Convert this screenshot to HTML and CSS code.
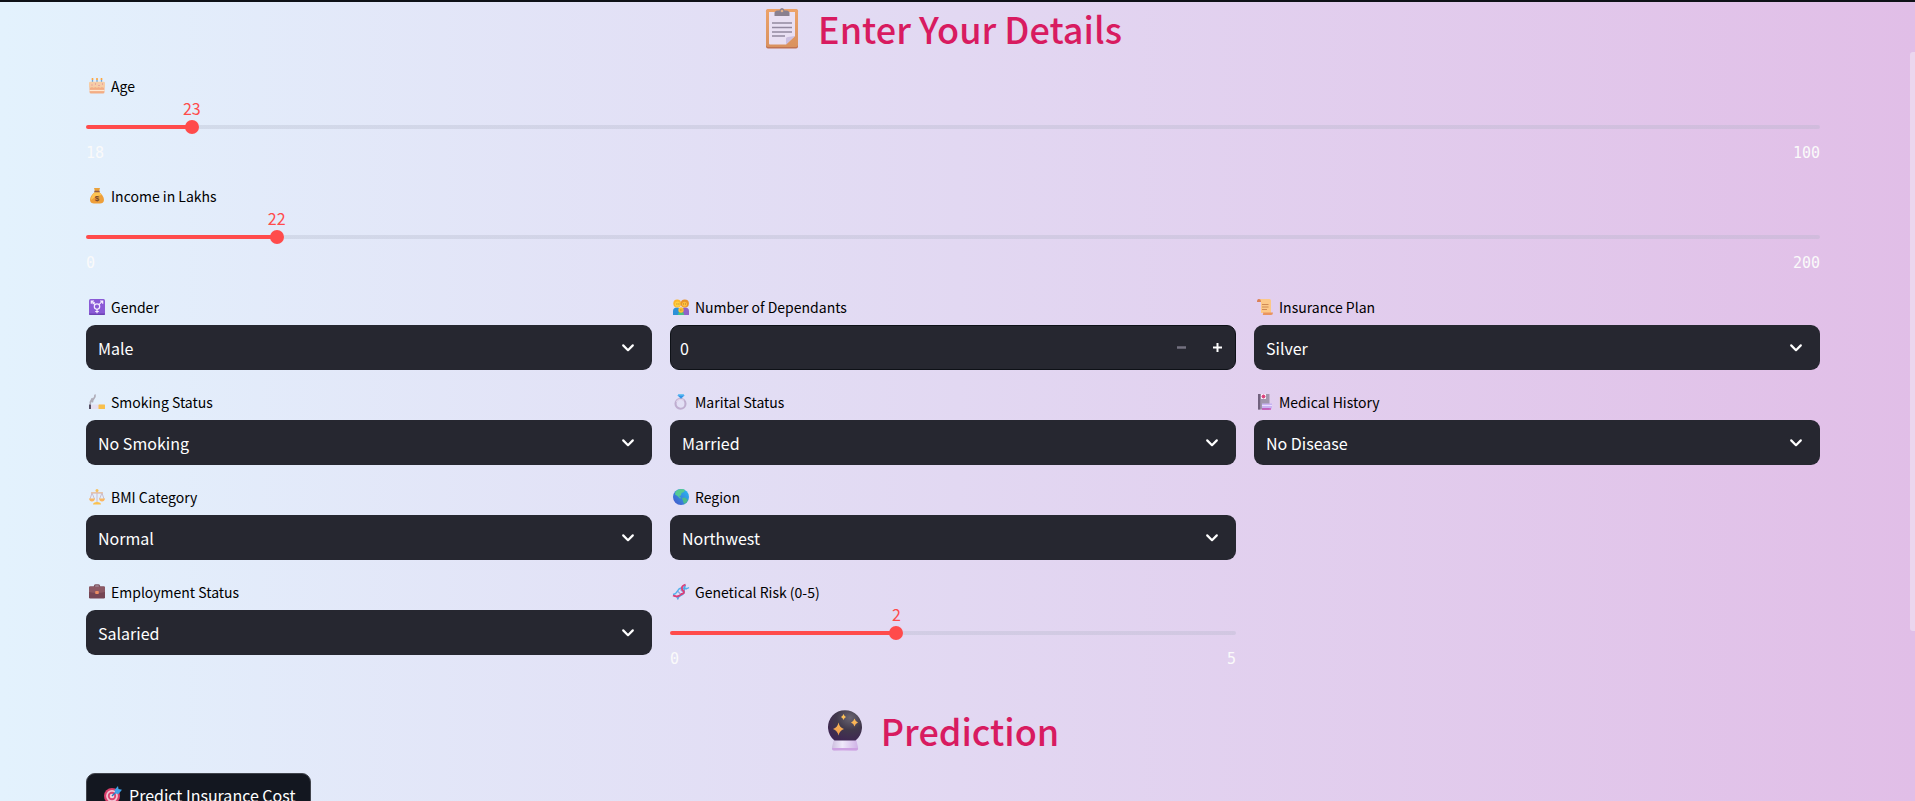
FILE: index.html
```html
<!DOCTYPE html>
<html lang="en">
<head>
<meta charset="utf-8">
<meta name="viewport" content="width=device-width, initial-scale=1">
<title>Insurance Cost Prediction</title>
<link rel="stylesheet" href="styles.css">
</head>
<body>
<svg class="defs" aria-hidden="true">
  <defs>
    <symbol id="chevron" viewBox="0 0 16 16"><path d="M3.2 5.4 8 10.2l4.800-4.800" fill="none" stroke="#fff" stroke-width="2.200" stroke-linecap="round" stroke-linejoin="round"/></symbol>
    <linearGradient id="board" x1="0" y1="0" x2="0" y2="1"><stop offset="0" stop-color="#eda369"/><stop offset="1" stop-color="#d9925f"/></linearGradient>
    <radialGradient id="ball" cx=".65" cy=".25" r=".8"><stop offset="0" stop-color="#6a6571"/><stop offset=".5" stop-color="#41394b"/><stop offset="1" stop-color="#3f2653"/></radialGradient>
    <linearGradient id="base" x1="0" y1="0" x2="1" y2="0"><stop offset="0" stop-color="#cdbfdf"/><stop offset=".4" stop-color="#efe8fa"/><stop offset="1" stop-color="#cfb2e6"/></linearGradient>
    <linearGradient id="gold" x1="0" y1="0" x2="0" y2="1"><stop offset="0" stop-color="#ffc75a"/><stop offset="1" stop-color="#f19a4e"/></linearGradient>
    <linearGradient id="globe" x1="1" y1="0" x2="0" y2="1"><stop offset="0" stop-color="#27c0f5"/><stop offset="1" stop-color="#4652c8"/></linearGradient>
  </defs>
</svg>
<main class="page">
  <h1 class="heading">
    <svg class="heading-icon" viewBox="0 0 40 42" aria-hidden="true">
      <rect x="4" y="2.500" width="32" height="39" rx="2" fill="#c07252"/>
      <rect x="4" y="2" width="32" height="38" rx="2" fill="url(#board)"/>
      <path d="M7 5h26v24l-9 8.500H8q-1 0-1-1z" fill="#e9e0f3"/>
      <path d="M33 29l-9 8.500v-6q0-1.500 2-1.500z" fill="#cbbfe0"/>
      <path d="M12.500 9V6q0-2 3-2.500h2Q18 1 20 1t2.500 2.500h2q3 .5 3 2.500v3z" fill="#8a808f"/>
      <circle cx="20" cy="4" r="1.300" fill="#e3b08a"/>
      <path d="M10 16h20M10 20.500h20M10 25h20M10 29h13" stroke="#9389a0" stroke-width="1.300"/>
    </svg>
    <span>Enter Your Details</span>
  </h1>

  <form class="form">
    <div class="field">
      <label class="label" for="age">
        <svg class="icon" viewBox="0 0 16 16" aria-hidden="true">
          <path d="M3.500 1.500V5M8 1.500V5M12.500 1.500V5" stroke="#6ea6d8" stroke-width="1.300"/><path d="M3.500 0v2M8 0v2M12.500 0v2" stroke="#ffa63d" stroke-width="1.600"/>
          <rect x=".5" y="4.500" width="15" height="11" rx="1.500" fill="#f3ad84"/><path d="M0 5q0-1.300 1.500-1.300h13Q16 3.700 16 5v4q-1.500 1.500-3 0-1.700 1.500-3.300 0-1.700 1.500-3.400 0-1.600 1.500-3.300 0Q1 10.500 0 9z" fill="#f6cda6"/>
          <path d="M.5 12.500h15" stroke="#ffe9d2" stroke-width="1.200"/><path d="M2.500 7h1M6 6h1M9.500 7.500h1M13 6h1" stroke="#d98098"/>
        </svg>
        Age
      </label>
      <div class="slider">
        <output class="slider-value" for="age" style="--pos:6.1%">23</output>
        <div class="slider-bar"><div class="track" style="--pos:6.1%"></div><input class="range" id="age" type="range" min="18" max="100" value="23"></div>
        <div class="ticks"><span>18</span><span>100</span></div>
      </div>
    </div>

    <div class="field">
      <label class="label" for="income">
        <svg class="icon" viewBox="0 0 16 16" aria-hidden="true">
          <path d="M5 0h6l-1 3.500H6z" fill="#e9a13b"/><path d="M6 4h4c3 2 5 5 5 8 0 2.500-2 3.500-4 3.500H5c-2 0-4-1-4-3.500 0-3 2-6 5-8z" fill="#ee9f3a"/><path d="M6 4h4c1 .7 2 2 2.500 3-3 .5-7 2-10.500 5 0-3 1.500-6 4-8z" fill="#fcc453"/><path d="M5.300 3.500h5.400" stroke="#8d5a48" stroke-width="1.500"/>
          <text x="8" y="13" text-anchor="middle" class="coin">$</text>
        </svg>
        Income in Lakhs
      </label>
      <div class="slider">
        <output class="slider-value" for="income" style="--pos:11%">22</output>
        <div class="slider-bar"><div class="track" style="--pos:11%"></div><input class="range" id="income" type="range" min="0" max="200" value="22"></div>
        <div class="ticks"><span>0</span><span>200</span></div>
      </div>
    </div>

    <div class="columns">
      <div class="column">
        <div class="field">
          <label class="label" for="gender">
            <svg class="icon" viewBox="0 0 16 16" aria-hidden="true">
              <rect width="16" height="16" rx="1.500" fill="#8a5ad6"/><path d="M0 14.500h16v.5q0 1-1 1H1q-1 0-1-1z" fill="#6d43b4"/>
              <g fill="none" stroke="#f5edff" stroke-width="1.200"><circle cx="8" cy="7.600" r="2.700"/><path d="M10 5.600 13.400 2.200M11 2h2.700v2.700M6 5.600 2.600 2.200M5 2H2.300v2.700M3.600 5.200l2-2M8 10.300v4M6.200 12.500h3.600"/></g>
            </svg>
            Gender
          </label>
          <div class="select-box"><select class="select" id="gender"><option>Male</option><option>Female</option></select><svg class="chevron" aria-hidden="true"><use href="#chevron"/></svg></div>
        </div>
        <div class="field">
          <label class="label" for="smoking">
            <svg class="icon" viewBox="0 0 16 16" aria-hidden="true">
              <path d="M1.500 10.500C-.5 7 4 6.500 3 4M3.500 8.500c-1-3.500 3.500-4 2.500-8" fill="none" stroke="#b0aeb9" stroke-width="1.700"/><rect y="10.500" width="16" height="4.500" rx=".6" fill="#e6dff0"/><rect y="10.500" width="2" height="4.500" fill="#565064"/><rect x="9.500" y="10.500" width="6.500" height="4.500" rx=".6" fill="#f8c04c"/>
            </svg>
            Smoking Status
          </label>
          <div class="select-box"><select class="select" id="smoking"><option>No Smoking</option><option>Occasional</option><option>Regular</option></select><svg class="chevron" aria-hidden="true"><use href="#chevron"/></svg></div>
        </div>
        <div class="field">
          <label class="label" for="bmi">
            <svg class="icon" viewBox="0 0 16 16" aria-hidden="true">
              <path d="M8 1v12M2.500 4h11M3 4 1 10M3 4l2.500 6M13 4l-2.500 6M13 4l2 6" fill="none" stroke="#cbbccc"/><path d="M2 3.800h12" stroke="#edbd8f"/><circle cx="8" cy="1.500" r="1.500" fill="#f6c05b"/><path d="M0 9.500h6q-.5 3-3 3t-3-3zM10 9.500h6q-.5 3-3 3t-3-3z" fill="#fbb761"/><path d="M4 15.500q0-2.500 4-2.500t4 2.500z" fill="#fac14f"/>
            </svg>
            BMI Category
          </label>
          <div class="select-box"><select class="select" id="bmi"><option>Normal</option><option>Overweight</option><option>Obesity</option><option>Underweight</option></select><svg class="chevron" aria-hidden="true"><use href="#chevron"/></svg></div>
        </div>
        <div class="field">
          <label class="label" for="employment">
            <svg class="icon" viewBox="0 0 16 16" aria-hidden="true">
              <path d="M5.500 3.500V2q0-1 1-1h3q1 0 1 1v1.500" fill="none" stroke="#7d5360" stroke-width="1.300"/><rect y="2.500" width="16" height="12" rx="1.300" fill="#754654"/><path d="M0 8V3.500q0-1 1-1h14q1 0 1 1V8q-8 2-16 0z" fill="#8c5964"/><rect x="6.200" y="7" width="3.600" height="3" rx=".8" fill="#ea8d62"/>
            </svg>
            Employment Status
          </label>
          <div class="select-box"><select class="select" id="employment"><option>Salaried</option><option>Self-Employed</option><option>Freelancer</option></select><svg class="chevron" aria-hidden="true"><use href="#chevron"/></svg></div>
        </div>
      </div>

      <div class="column">
        <div class="field">
          <label class="label" for="dependants">
            <svg class="icon" viewBox="0 0 16 16" aria-hidden="true">
              <path d="M0 16v-4q0-3.500 4-3.500T8 12v4z" fill="#2c91d8"/><path d="M8 16v-4q0-3.500 4-3.500t4 3.500v4z" fill="#8f62c9"/><circle cx="4.200" cy="4.500" r="3.900" fill="#fbb62d"/><circle cx="11.800" cy="4.500" r="4.100" fill="#e8942c"/><circle cx="4.500" cy="5.200" r="2.600" fill="#ffd03f"/><circle cx="11.500" cy="5.200" r="2.500" fill="#ffc03d"/><path d="M5 16q0-3.500 3-3.500t3 3.500z" fill="#49c282"/><circle cx="8" cy="11" r="2.700" fill="#ffc02e"/><path d="M3.500 5h.8M5.500 5h.8M10 5h.8M12 5h.8M7 11h.6M8.600 11h.6" stroke="#74523f" stroke-width=".8"/>
            </svg>
            Number of Dependants
          </label>
          <div class="number-box">
            <input class="number" id="dependants" type="number" min="0" max="10" value="0">
            <button class="step" type="button" aria-label="Decrease" disabled><svg class="step-icon" viewBox="0 0 10 10"><path d="M0 5h10" stroke="#73717f" stroke-width="2.600"/></svg></button>
            <button class="step" type="button" aria-label="Increase"><svg class="step-icon" viewBox="0 0 10 10"><path d="M0 5h10M5 0v10" stroke="#fff" stroke-width="2.200"/></svg></button>
          </div>
        </div>
        <div class="field">
          <label class="label" for="marital">
            <svg class="icon" viewBox="0 0 16 16" aria-hidden="true">
              <circle cx="7.500" cy="9.800" r="5" fill="none" stroke="#bfaed0" stroke-width="2.100"/><path d="M3.300 8a4.800 4.800 0 0 1 7.500-1.500" fill="none" stroke="#ded2e8" stroke-width="1.200"/><path d="M4.500 1.500 6 0h4l1.500 1.500L8 4.800z" fill="#3396e6"/><path d="M4.500 1.500 6 0h4l1.500 1.500z" fill="#6cc4f5"/>
            </svg>
            Marital Status
          </label>
          <div class="select-box"><select class="select" id="marital"><option>Married</option><option>Unmarried</option></select><svg class="chevron" aria-hidden="true"><use href="#chevron"/></svg></div>
        </div>
        <div class="field">
          <label class="label" for="region">
            <svg class="icon" viewBox="0 0 16 16" aria-hidden="true">
              <circle cx="8" cy="8" r="8" fill="url(#globe)"/><path d="M2.500 2.500Q5 0 8 0q3 0 4 1l-1 2-2.500 1L8 6.500l-2 .5 2 2-1 .5L4.500 7 2 5.500z" fill="#57cb91"/><path d="M9 9l3-.5 3 2.500-1.500 2.500L11 15l-1-3z" fill="#4abb8b"/>
            </svg>
            Region
          </label>
          <div class="select-box"><select class="select" id="region"><option>Northwest</option><option>Northeast</option><option>Southwest</option><option>Southeast</option></select><svg class="chevron" aria-hidden="true"><use href="#chevron"/></svg></div>
        </div>
        <div class="field">
          <label class="label" for="risk">
            <svg class="icon" viewBox="0 0 16 16" aria-hidden="true">
              <path d="M1.500 11l3 3M5 7.500l4 4M7.500 5.500l4 4M10.500 2.500l3 3" fill="none" stroke="#8f9fe0" stroke-width="1.200"/>
              <path d="M0 10.500C6 9.500 3.500 4.500 8 4c4-.3 4.500 2 8-.5" fill="none" stroke="#52b2ec" stroke-width="1.500"/>
              <path d="M5 15.500C3.500 11.500 8 12.500 10.500 9.500c2-3-1-4 2-8.500" fill="none" stroke="#4fa6e4" stroke-width="1.500"/>
              <path d="M0 11.500c3.500 1.500 7 1 8-1.500M12.500.5C8 2 8 5 10.500 7c1.500 1.500-.5 3-2.500 3" fill="none" stroke="#dd3f78" stroke-width="1.800"/>
            </svg>
            Genetical Risk (0-5)
          </label>
          <div class="slider">
            <output class="slider-value" for="risk" style="--pos:40%">2</output>
            <div class="slider-bar"><div class="track" style="--pos:40%"></div><input class="range" id="risk" type="range" min="0" max="5" value="2"></div>
            <div class="ticks"><span>0</span><span>5</span></div>
          </div>
        </div>
      </div>

      <div class="column">
        <div class="field">
          <label class="label" for="plan">
            <svg class="icon" viewBox="0 0 16 16" aria-hidden="true">
              <path d="M2 0h10.500q1.500 0 1.500 1.500V14H4V3z" fill="#fcc888"/><path d="M1.800 0Q4 0 4 3H0Q0 0 1.800 0z" fill="#db8057"/><path d="M6 13.500h10q0 2.500-2 2.500H5.500q1-.5.500-2.500z" fill="#e9945f"/><path d="M5 5.500h6.500M5 8h6.500M5 10.500h5" stroke="#c9834f" stroke-width=".9"/>
            </svg>
            Insurance Plan
          </label>
          <div class="select-box"><select class="select" id="plan"><option>Silver</option><option>Bronze</option><option>Gold</option></select><svg class="chevron" aria-hidden="true"><use href="#chevron"/></svg></div>
        </div>
        <div class="field">
          <label class="label" for="history">
            <svg class="icon" viewBox="0 0 16 16" aria-hidden="true">
              <rect x="1" width="11.500" height="15.500" rx=".5" fill="#a196ad"/><path d="M1 0h2.200v15.500H1z" fill="#71627e"/><rect x="4" width="5" height="5" fill="#f5e9f4"/><path d="M6.500.5v4M4.500 2.500h4M5 1l3 3M8 1 5 4" stroke="#db3a76" stroke-width=".9"/><rect x="5" y="9.500" width="10" height="5" fill="#c9b3f2"/><path d="M5 11.500h10" stroke="#eadfff"/><path d="M5 15h9" stroke="#c835ad" stroke-width="1.200"/>
            </svg>
            Medical History
          </label>
          <div class="select-box"><select class="select" id="history"><option>No Disease</option><option>Diabetes</option><option>High blood pressure</option><option>Thyroid</option></select><svg class="chevron" aria-hidden="true"><use href="#chevron"/></svg></div>
        </div>
      </div>
    </div>

    <h2 class="heading heading-result">
      <svg class="heading-icon" viewBox="0 0 40 42" aria-hidden="true">
        <path d="M9 30h22l2 8q.5 3.500-2 3.500H9q-2.500 0-2-3.500z" fill="url(#base)"/><path d="M7 39h26q0 2.500-2 2.500H9q-2 0-2-2.500z" fill="#cda1e2"/>
        <path d="M9.500 31.500a17 17 0 1 1 21 0z" fill="url(#ball)"/>
        <path d="M13.500 13.500q1 5 5.500 6.500-4.500 1.500-5.500 6.500-1-5-5.500-6.500 4.500-1.500 5.500-6.500zM29.500 9.500q.8 3 3.500 4-2.700 1-3.500 4-.8-3-3.500-4 2.700-1 3.500-4zM18.500 5q.6 2.200 2.500 3-1.900.8-2.500 3-.6-2.200-2.500-3 1.900-.8 2.500-3z" fill="url(#gold)"/>
      </svg>
      <span>Prediction</span>
    </h2>

    <button class="predict" type="button">
      <svg class="predict-icon" viewBox="0 0 18 18" aria-hidden="true">
        <circle cx="8" cy="10" r="8" fill="#da3f6c"/><circle cx="8" cy="10" r="5.900" fill="#f3c6d5"/><circle cx="8" cy="10" r="4.200" fill="#da4672"/><circle cx="8" cy="10" r="2.300" fill="#f6d5df"/><path d="M8 10l6-6" stroke="#277bc4" stroke-width="1.400"/><path d="M10.500 4 14 0l.5 3 3.500.8L14.500 8l-3-.5z" fill="#3fa2e8"/>
      </svg>
      Predict Insurance Cost
    </button>
  </form>
</main>
<div class="scroll-thumb" aria-hidden="true"></div>
</body>
</html>
```

FILE: styles.css
```css
* {
  box-sizing: border-box;
}

body {
  margin: 0;
  height: 100vh;
  overflow: hidden;
  border-top: 2px solid #0e1117;
  background: linear-gradient(to right, #e3f2fd, #e1bee7);
  color: #000;
  font-family: "Noto Sans CJK JP", "Noto Sans CJK SC", "Open Sans", sans-serif;
  font-size: 16px;
}

.defs {
  position: absolute;
  width: 0;
  height: 0;
}

.page {
  padding: 0 95px 0 86px;
}

.heading {
  display: flex;
  justify-content: center;
  align-items: center;
  gap: 16px;
  margin: 0 0 20px;
  padding-right: 22px;
  color: #d81b60;
  font-size: 36px;
  font-weight: 500;
  line-height: 52px;
}

.heading-icon {
  width: 40px;
  height: 42px;
}

.heading-result {
  margin-top: 14px;
}

.form,
.column {
  display: flex;
  flex-direction: column;
  gap: 20px;
}

.columns {
  display: grid;
  grid-template-columns: repeat(3, minmax(0, 1fr));
  gap: 18px;
  margin-top: 1px;
}

.label {
  display: flex;
  align-items: center;
  gap: 6px;
  padding-left: 3px;
  font-size: 14px;
  line-height: 24px;
}

.icon {
  width: 16px;
  height: 16px;
  overflow: visible;
}

.coin {
  fill: #77482f;
  font-family: "Liberation Sans", sans-serif;
  font-size: 8px;
  font-weight: 700;
}

.slider-value {
  display: block;
  width: max-content;
  margin-left: var(--pos);
  transform: translateX(-50%);
  color: #ff4b4b;
  font-size: 16px;
  line-height: 20px;
}

.slider-bar {
  display: grid;
  align-items: center;
  height: 18px;
}

.track,
.range {
  grid-area: 1 / 1;
}

.track {
  height: 4px;
  border-radius: 4px;
  background: linear-gradient(to right, #ff4b4b var(--pos), rgba(172, 177, 195, 0.3) var(--pos));
}

.range {
  appearance: none;
  width: calc(100% + 14px);
  height: 14px;
  margin: 0 -7px;
  background: transparent;
}

.range::-webkit-slider-thumb {
  appearance: none;
  width: 14px;
  height: 14px;
  border-radius: 50%;
  background: #ff4b4b;
}

.ticks {
  display: flex;
  justify-content: space-between;
  padding-top: 6px;
  color: #fafafa;
  font-family: "DejaVu Sans Mono", monospace;
  font-size: 15px;
  line-height: 22px;
}

.select-box {
  display: grid;
  align-items: center;
  margin-top: 6px;
}

.select,
.chevron {
  grid-area: 1 / 1;
}

.select {
  appearance: none;
  width: 100%;
  height: 45px;
  padding: 0 40px 0 12px;
  border: 0;
  border-radius: 9px;
  background: #262730;
  color: #fff;
  font: inherit;
}

.chevron {
  justify-self: end;
  width: 16px;
  height: 16px;
  margin-right: 16px;
  pointer-events: none;
}

.number-box {
  display: flex;
  height: 45px;
  margin-top: 6px;
  overflow: hidden;
  border: 1px solid #0e1117;
  border-radius: 9px;
  background: #262730;
}

.number {
  appearance: textfield;
  flex: 1;
  min-width: 0;
  padding: 0 9px;
  border: 0;
  background: transparent;
  color: #fff;
  font: inherit;
}

.number::-webkit-inner-spin-button {
  appearance: none;
}

.step {
  display: grid;
  place-items: center;
  width: 36px;
  padding: 0;
  border: 0;
  background: transparent;
}

.step-icon {
  width: 9px;
  height: 9px;
}

.predict {
  display: flex;
  align-self: flex-start;
  align-items: center;
  gap: 7px;
  height: 43px;
  margin-top: -23px;
  padding: 0 15px 0 17px;
  border: 1px solid #41444c;
  border-radius: 9px;
  background: #131720;
  color: #fff;
  font: inherit;
}

.predict-icon {
  width: 18px;
  height: 18px;
}

.scroll-thumb {
  position: fixed;
  top: 6.5vh;
  right: 0;
  width: 5px;
  height: 72.3vh;
  border-radius: 3px 0 0 3px;
  background: rgba(250, 250, 250, 0.4);
}
```
